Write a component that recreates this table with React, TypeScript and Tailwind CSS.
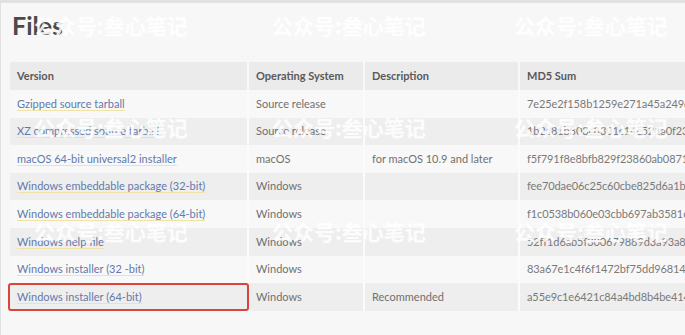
const rows = [
  { v: "Gzipped source tarball", os: "Source release", d: "", md5: "7e25e2f158b1259e271a45a249cb24bb" },
  { v: "XZ compressed source tarball", os: "Source release", d: "", md5: "1b2a81b303c8301c14c521a0f230c7e5" },
  { v: "macOS 64-bit universal2 installer", os: "macOS", d: "for macOS 10.9 and later", md5: "f5f791f8e8bfb829f23860ab08712a2f" },
  { v: "Windows embeddable package (32-bit)", os: "Windows", d: "", md5: "fee70dae06c25c60cbe825d6a1b4a2de" },
  { v: "Windows embeddable package (64-bit)", os: "Windows", d: "", md5: "f1c0538b060e03cbb697ab3581cb1e0f" },
  { v: "Windows help file", os: "Windows", d: "", md5: "52ff1d6ab5f300679889d3a93a8c6a0e" },
  { v: "Windows installer (32 -bit)", os: "Windows", d: "", md5: "83a67e1c4f6f1472bf75dd9681493c1d" },
  { v: "Windows installer (64-bit)", os: "Windows", d: "Recommended", md5: "a55e9c1e6421c84a4bd8b4be41423b8c" },
];

// watermark grid over the page
const marks = [
  { top: 10, lefts: [33, 271, 513] },
  { top: 112, lefts: [33, 271, 513] },
  { top: 216, lefts: [33, 271, 513] },
];

export default function App() {
  return (
    <div
      className="relative h-[335px] w-[685px] overflow-hidden bg-[#f7f7f7] border-t-[3px] border-l border-[#e1e1e1]"
      style={{ fontFamily: "Lato, 'Noto Sans', sans-serif" }}
    >
      <h2 className="pl-[11px] pt-[7px] text-[25px] leading-[30px] font-bold text-[#4a4a4a]">Files</h2>

      <table className="ml-[9px] mt-[22px] w-[780px] table-fixed border-collapse text-[11px]">
        <colgroup>
          <col className="w-[238px]" />
          <col className="w-[116px]" />
          <col className="w-[155px]" />
          <col />
        </colgroup>
        <thead>
          <tr className="h-[28px] bg-[#ebebeb] text-left text-[#595959] font-bold">
            <th className="pl-[7px] font-bold">Version</th>
            <th className="pl-[7px] border-l-2 border-[#f8f8f8] font-bold">Operating System</th>
            <th className="pl-[7px] border-l-2 border-[#f8f8f8] font-bold">Description</th>
            <th className="pl-[7px] border-l-2 border-[#f8f8f8] font-bold">MD5 Sum</th>
          </tr>
        </thead>
        <tbody>
          {rows.map((r, i) => (
            <tr key={r.v} className={`h-[27.6px] text-[#707070] ${i % 2 ? "bg-[#eeeeee]" : "bg-[#f8f8f8]"}`}>
              <td className="relative pl-[7px]">
                <a className="text-[#6379ab] border-b border-[#f1e2a8]">{r.v}</a>
                {i === rows.length - 1 && (
                  <span className="absolute -left-[2px] -right-[2px] top-0 bottom-0 rounded-[3px] border-2 border-[#d9453b]" />
                )}
              </td>
              <td className="pl-[7px] border-l-2 border-[#fbfbfb]">{r.os}</td>
              <td className="pl-[7px] border-l-2 border-[#fbfbfb]">{r.d}</td>
              <td className="pl-[7px] border-l-2 border-[#fbfbfb] whitespace-nowrap text-[#7a7a7a] tracking-[-0.1px]">{r.md5}</td>
            </tr>
          ))}
        </tbody>
      </table>

      {marks.map((m) =>
        m.lefts.map((l) => (
          <span
            key={`${m.top}-${l}`}
            className="pointer-events-none absolute whitespace-nowrap text-[21px] leading-[24px] font-bold text-white/85"
            style={{ top: m.top, left: l, fontFamily: "'Noto Sans CJK SC', sans-serif" }}
          >
            公众号:叁心笔记
          </span>
        ))
      )}
    </div>
  );
}
